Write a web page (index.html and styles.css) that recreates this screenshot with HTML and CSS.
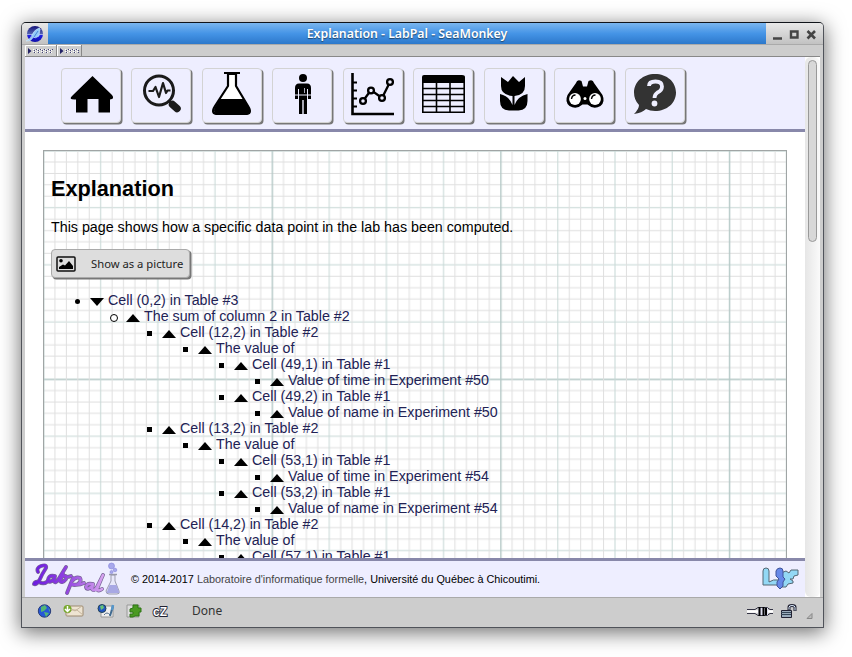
FILE: index.html
```html
<!DOCTYPE html>
<html lang="en">
<head>
<meta charset="utf-8">
<title>Explanation - LabPal</title>
<link rel="stylesheet" href="styles.css">
</head>
<body>
<div class="window">
  <div class="titlebar">
    <div class="app-icon"><svg width="18" height="18" viewBox="0 0 18 18"><defs><linearGradient id="sm" x2="0" y2="1"><stop offset="0" stop-color="#14147a"/><stop offset=".48" stop-color="#5260b0"/><stop offset=".52" stop-color="#2020ee"/><stop offset="1" stop-color="#1010a8"/></linearGradient></defs><circle cx="9" cy="9" r="8" fill="url(#sm)"/><path d="M1 9.500h16" stroke="#bcd" stroke-width=".8"/><path d="M0 16Q5 14 6 10 8 5 13 3Q15 3 13.500 7L13 11Q9 14 7 12Q6 16 0 16Z" fill="#94ccf8" stroke="#d4ecff" stroke-width=".6"/><path d="M8 12L12 6" stroke="#4a86d8"/></svg></div>
    <div class="title">Explanation - LabPal - SeaMonkey</div>
    <div class="controls"><svg width="57" height="21" viewBox="0 0 57 21"><path d="M7 15.500h9M25 8.500h6.500v6H25z" fill="none" stroke="#444" stroke-width="2.400"/><path d="M41.500 8l7.500 7.500M49 8l-7.500 7.500" stroke="#444" stroke-width="2.600"/></svg></div>
  </div>
  <div class="grippies">
    <svg width="60" height="11" viewBox="0 0 60 11"><path d="M.5 11V.500H31M33 .500h24" fill="none" stroke="#fff"/><path d="M31.500 0v11M56.500 0v11" stroke="#888"/><path d="M32.500 0v11" stroke="#fff"/><path d="M3 3l3.500 3-3.500 3zM35 3l3.500 3-3.500 3z" fill="#226"/><path d="M8 4.500h20M8 6.500h20M40 4.500h14M40 6.500h14" stroke="#fff" stroke-dasharray="1 3"/><path d="M10 5.500h18M10 7.500h18M42 5.500h12M42 7.500h12" stroke="#fff" stroke-dasharray="1 3"/><path d="M9 5.500h19M9 7.500h19M41 5.500h13M41 7.500h13M11 4.500h17M43 4.500h11" stroke="#447" stroke-dasharray="1 3"/></svg>
  </div>
  <div class="viewport">
    <div class="page">
      <nav class="menu">
        <a class="tool"><svg viewBox="0 0 60 55"><path d="M30.500 7L50 26q3 4-2 4.500v13H36.500V30h-11v13.500H14V30.500Q6 31 10 27z"/></svg></a>
        <a class="tool"><svg viewBox="0 0 60 55"><g fill="none" stroke="#1b1b1b"><circle cx="27" cy="21.500" r="14.500" stroke-width="3"/><path d="M16.500 22h4.500l2.500-4 3.500 10 4-14 3 10 1.500-2.500h3" stroke-width="2.200" stroke-linejoin="round"/><path d="M37 32l3 3" stroke-width="3"/><path d="M40.500 35.500l4.500 4" stroke-width="7.500" stroke-linecap="round"/></g></svg></a>
        <a class="tool"><svg viewBox="0 0 60 55"><path d="M26 5v12L13 37q-5 8 3 8h27q8 0 3-8L34 17V5z" fill="#fff" stroke="#000" stroke-width="2.200"/><path d="M22 4h16" stroke="#000" stroke-width="2.200"/><path d="M18 30h24l5 8q3 6-4 7H16q-6-1-3-7z"/></svg></a>
        <a class="tool"><svg viewBox="0 0 60 55"><circle cx="30" cy="9" r="4"/><path d="M26 14.500h8q4 0 4 4.500V30h-3V20h-1v25h-3.300V31h-1.400v14H26V20h-1v10h-3V19q0-4.500 4-4.500z"/><path d="M22 26h16" stroke="#eef"/><path d="M31.500 19v5" stroke="#aab"/></svg></a>
        <a class="tool"><svg viewBox="0 0 60 55"><g fill="none" stroke="#000"><path d="M9.500 4v41H51" stroke-width="2.600"/><path d="M10 13.500h4M10 21.500h4M10 29.500h4M10 37.500h4" stroke-width="2"/><path d="M20 32l8-11 11 8 8-16" stroke-width="2.300"/><g fill="#eef" stroke-width="2.300"><circle cx="20" cy="32" r="2.900"/><circle cx="28" cy="21.500" r="2.900"/><circle cx="39" cy="29" r="2.900"/><circle cx="47" cy="13" r="2.900"/></g></g></svg></a>
        <a class="tool"><svg viewBox="0 0 60 55"><path d="M8 8q0-2 2-2h38q3 0 3 2v6H8z"/><path d="M8.800 12h41.400v31.200H8.800zM22.500 12v31M36 12v31M9 19.500h41M9 25.500h41M9 31.500h41M9 37.500h41" fill="none" stroke="#000" stroke-width="1.600"/></svg></a>
        <a class="tool"><svg viewBox="0 0 60 55"><path d="M17 8l7 5 5-6 6 6 6-5v9q0 9-10.500 10v9Q34 27 43.500 25v7q0 9-9 9.500H25q-9-.5-9-9.500v-7q9 2 12.500 11v-9Q17 26 17 17z"/></svg></a>
        <a class="tool"><svg viewBox="0 0 60 55"><path d="M21 14q1-4 5.500-2L28 17.500h4l1.500-5.500q4.500-2 5.500 2l8.500 12q3 7-2 11-7 4-13-1.500h-5q-6 5.500-13 1.500-5-4-2-11z"/><g fill="#fff"><circle cx="20" cy="30" r="5.900"/><circle cx="40" cy="30" r="5.900"/></g><circle cx="30" cy="29.500" r="1.500" fill="#fff"/><path d="M16.500 30q.5-4 4-4M36.500 30q.5-4 4-4" fill="none" stroke="#000" stroke-width="1.400"/></svg></a>
        <a class="tool"><svg viewBox="0 0 60 55"><path d="M30 5c12 0 21 8 21 18.500S42 42 30 42q-5 0-9-2-4 4-12 5 5-5 5-9-5-5-5-12.500C9 13 18 5 30 5z" fill="#333"/><path d="M24 17q0-4.500 6.500-4.500 6.500 0 6.500 5 0 4-4.500 6-3 2-3 5.500" fill="none" stroke="#eef" stroke-width="3.800"/><circle cx="29.500" cy="34.500" r="2.900" fill="#eef"/></svg></a>
      </nav>
      <main class="content">
        <section class="paper">
          <svg class="grid"><defs><pattern id="graph" width="228.600" height="228.600" patternUnits="userSpaceOnUse" patternTransform="translate(-1 -1)"><g id="rows"><path d="M0 11.930h229M0 23.360h229M0 34.790h229M0 46.220h229M0 69.080h229M0 80.510h229M0 91.940h229M0 103.370h229M0 126.230h229M0 137.660h229M0 149.090h229M0 160.520h229M0 183.380h229M0 194.810h229M0 206.240h229M0 217.670h229" stroke="#dfdfdf"/><path d="M0 57.650h229M0 114.800h229M0 171.950h229" stroke="#c6d8d5"/><path d="M0 .700h229" stroke="#b4c8c6" stroke-width="1.400"/></g><use href="#rows" transform="matrix(0 1 1 0 0 0)"/></pattern></defs><rect width="100%" height="100%" fill="url(#graph)"/></svg>
          <h1>Explanation</h1>
          <p>This page shows how a specific data point in the lab has been computed.</p>
          <a class="picture-button"><svg width="20" height="16" viewBox="0 0 20 16"><rect x="1" y="1" width="18" height="14" rx="1" fill="none" stroke="#111" stroke-width="1.500"/><circle cx="5" cy="4.800" r="1.800"/><path d="M3 13V11l4-2.500 2 1L13 5l4 5v3z"/></svg><span>Show as a picture</span></a>
          <ul class="tree">
            <li class="disc"><i class="down"></i><a>Cell (0,2) in Table #3</a>
              <ul><li class="circle"><i></i><a>The sum of column 2 in Table #2</a>
                <ul>
                  <li><i></i><a>Cell (12,2) in Table #2</a>
                    <ul><li><i></i><a>The value of</a>
                      <ul>
                        <li><i></i><a>Cell (49,1) in Table #1</a><ul><li><i></i><a>Value of time in Experiment #50</a></li></ul></li>
                        <li><i></i><a>Cell (49,2) in Table #1</a><ul><li><i></i><a>Value of name in Experiment #50</a></li></ul></li>
                      </ul></li></ul></li>
                  <li><i></i><a>Cell (13,2) in Table #2</a>
                    <ul><li><i></i><a>The value of</a>
                      <ul>
                        <li><i></i><a>Cell (53,1) in Table #1</a><ul><li><i></i><a>Value of time in Experiment #54</a></li></ul></li>
                        <li><i></i><a>Cell (53,2) in Table #1</a><ul><li><i></i><a>Value of name in Experiment #54</a></li></ul></li>
                      </ul></li></ul></li>
                  <li><i></i><a>Cell (14,2) in Table #2</a>
                    <ul><li><i></i><a>The value of</a>
                      <ul><li><i></i><a>Cell (57,1) in Table #1</a></li></ul></li></ul></li>
                </ul></li></ul></li>
          </ul>
        </section>
      </main>
      <footer class="footer">
        <svg class="logo" width="90" height="34" viewBox="0 0 90 34"><defs><linearGradient id="lp" gradientUnits="userSpaceOnUse" x1="0" y1="0" x2="74" y2="0"><stop offset="0" stop-color="#6a1ae0"/><stop offset=".45" stop-color="#9040e0"/><stop offset="1" stop-color="#dcaaf0"/></linearGradient><g id="word" fill="none" stroke-linecap="round" stroke-linejoin="round"><path d="M6 10Q4 6 9 4 15 2 14 6 10 12 7 19 4 23 2 22 3 19 7 20 12 23 16 19"/><path d="M22 14q-5-1-6 4 1 4 6-1l1-3-1 5q1 3 4-1L34 5M31 12l-3 7q2 3 6-2 1-4-3-3M34 15q3 0 5-1"/><path d="M41 16L35 31M40 19q4-5 8-3 2 3-2 6-4 2-7 0 7 2 13-1"/><path d="M60 22q-5-1-6 3 1 4 6-1l1-2-1 5q2 3 5-2L71 13M70 15l-5 12q1 3 5 0"/></g></defs><use href="#word" stroke="#776497" stroke-width="3.900"/><use href="#word" stroke="url(#lp)" stroke-width="2.500"/><path d="M79 13v6l-5 10q0 3 3 3h8q3 0 2-3l-4-10v-6z" fill="#e8e8fa" stroke="#9b9bae"/><path d="M77.500 23h7l3 8H74.500z" fill="#a8a8e4"/><path d="M77 12.500h8" stroke="#99a" stroke-width="1.500"/><g fill="#a8a8ec" stroke="#8585dc" stroke-width=".6"><circle cx="79.500" cy="4" r="3"/><circle cx="83" cy="8" r="1.800"/><circle cx="79.500" cy="10" r="1.500"/></g></svg>
        <span class="copyright">© 2014-2017 <a>Laboratoire d'informatique formelle</a>, Université du Québec à Chicoutimi.</span>
        <svg class="lif" width="38" height="24" viewBox="0 0 38 24"><path d="M2 4q0-3 3-3t3 3v11q4-3 10-2v5H2z" fill="#93d8f5" stroke="#556773"/><path d="M20 6l5-2 3 2 2-3h7v5l-4 1-1 3h-3l3 2v2l-5 1-2 3h-5z" fill="#93d8f5" stroke="#556773"/><path d="M15 4q1-3 4-3t3 3v6l2 2-2 3v4l-3 3-3-3v-4l2-3-3-3z" fill="#6688e8" stroke="#405398"/></svg>
      </footer>
    </div>
    <div class="scrollbar"><div class="thumb"></div></div>
  </div>
  <div class="statusbar">
    <svg width="144" height="18" viewBox="0 0 144 18"><circle cx="11.500" cy="9" r="6.200" fill="#2557d8" stroke="#283d77"/><path d="M8 5l4-2 2 3-3 3-3 1zM11 10l5 1-3 4zM15 6l2 2v2z" fill="#54b774"/><rect x="33" y="4" width="17" height="10" rx="1" fill="#eee4d2" stroke="#9d8a70"/><path d="M33 13l6-5h5l6 5M34 4l8 5 7-5" fill="none" stroke="#c5b59d"/><circle cx="34.500" cy="7" r="4" fill="#77a82c"/><path d="M34.500 4v5M32 7l2.500 2.500L37 7" stroke="#fff" stroke-width="1.500" fill="none"/><path d="M68 4h12v11H68z" fill="#eee" stroke="#999"/><circle cx="69" cy="6.500" r="4" fill="#2255c7" stroke="#245"/><path d="M67 4l3-1 1 3-3 2z" fill="#69c477"/><path d="M71 13q3-4 6 0" stroke="#58718b" fill="none"/><path d="M80 4l-3 10" stroke="#406a90" stroke-width="2"/><path d="M80 3l-1 5" stroke="#5696c9" stroke-width="2.500"/><path d="M94 3h12v12H94z" fill="#ddd" stroke="#999"/><path d="M100 6V3h5v3h3v4h-2v4h-4l-2 1h-3v-3h3v-2h-3V7z" fill="#4a9a22" stroke="#2d7514"/><text x="120" y="14" class="cz">cZ</text></svg>
    <span class="done">Done</span>
    <svg class="status-right" width="72" height="20" viewBox="0 0 72 20"><path d="M1 8.500h8l3-2h9l3 2h3M1 12.500h8l3 2h9l3-2h3" fill="none" stroke="#334"/><path d="M1 10.500h26" stroke="#fff" stroke-width="2.500"/><path d="M12 7h10v7H12z" fill="#dde"/><path d="M13.500 6v9M17.500 6v9M20 7v7" stroke="#000" stroke-width="2"/><path d="M35.500 9.500h10v7h-10z" fill="#9ab" stroke="#223"/><path d="M35 11.500h10M35 13.500h10" stroke="#345"/><path d="M43 9V6q0-1.500 3-1.500T49 6v4" fill="none" stroke="#223" stroke-width="3"/><path d="M43 8.500V6.500q0-2 3-2t3 2v3" fill="none" stroke="#def"/><path d="M61 17.500h5v-5z" fill="#bbb" stroke="#888"/></svg>
  </div>
</div>
</body>
</html>
```
FILE: styles.css
```css
* { box-sizing: border-box; }
body { margin: 0; width: 852px; height: 657px; overflow: hidden; background: #fff; padding: 22px 28px 29px 21px; font-family: "Liberation Sans", sans-serif; }
svg { display: block; }
.window { height: 606px; border: 1px solid #50535a; border-top-color: #10141a; border-radius: 5px 5px 1px 1px; background: #cdcdcd; box-shadow: 0 4px 20px 1px rgba(0,0,0,.55); display: flex; flex-direction: column; overflow: hidden; }
.titlebar { height: 22px; flex: none; display: flex; background: linear-gradient(#e8e8e8, #c2c2c2); border-bottom: 1px solid #aaa; }
.app-icon { width: 26px; padding: 2px 0 0 4px; }
.title { flex: 1; background: linear-gradient(#7ab6ef, #4594e6 50%, #2c78cb); color: #fff; font: 600 12.300px/22px "Noto Sans", sans-serif; text-align: center; text-shadow: 0 1px 1px #246; }
.controls { width: 57px; }
.grippies { height: 12px; flex: none; margin: 0 3px; border-bottom: 1px solid #888; }
.viewport { height: 540px; flex: none; margin: 0 3px; display: flex; background: #fff; }
.page { width: 780px; display: flex; flex-direction: column; }
.menu { height: 75px; flex: none; background: #eef; border-bottom: 3px solid #88a; padding: 11px 0 0 36px; display: flex; gap: 10.450px; }
.tool { width: 60px; height: 55px; flex: none; border: 1px solid #d3d3d3; border-radius: 4px; box-shadow: 1.500px 1.500px .5px 0 #777; background: #eef; }
.tool svg { width: 60px; height: 55px; margin: 0 0 0 -.5px; }
.content { height: 426px; flex: none; overflow: hidden; padding: 18px 18px 0; }
.paper { position: relative; height: 420px; border: 1px solid #a0a5a5; padding: 0 7px; line-height: 16px; overflow: hidden; }
.grid { position: absolute; inset: 0; width: 100%; height: 100%; }
.paper > :not(.grid) { position: relative; }
h1 { font-size: 21.700px; line-height: 26px; margin: 25px 0 17px; }
.paper p { margin: 0 0 13px; line-height: 17px; font-size: 14.280px; }
.picture-button { display: flex; align-items: center; width: 139px; height: 29px; border: 1px solid #aaa; border-radius: 4px; background: #ddd; box-shadow: 1.500px 1.500px .5px 0 #777; padding-left: 4px; gap: 15px; font: 11.250px "Noto Sans", sans-serif; color: #222; white-space: nowrap; }
.picture-button svg { flex: none; }
ul { margin: 0; padding-left: 36px; list-style: none; }
.tree { margin: 14px 0 0; padding-left: 39px; font-size: 14.250px; }
li { white-space: nowrap; position: relative; }
li::before { content: ""; position: absolute; left: -15px; top: 7px; width: 5px; height: 5px; background: #000; }
li.disc::before { border-radius: 50%; }
li.circle::before { left: -16px; top: 6px; width: 6px; height: 6px; border: 1px solid #000; border-radius: 50%; background: #fff; }
li a { color: #225; }
li i { position: relative; top: -2px; display: inline-block; width: 14px; height: 8px; margin-right: 4px; vertical-align: -3px; background: #000; clip-path: polygon(50% 0, 100% 100%, 0 100%); }
li i.down { clip-path: polygon(0 0, 100% 0, 50% 100%); }
.footer { height: 39px; flex: none; border-top: 3px solid #88a; background: #eef; display: flex; align-items: center; padding: 0 6px 0 7px; font-size: 10.850px; }
.logo { flex: none; }
.copyright { margin-left: 9px; }
.copyright a { color: #444; }
.lif { margin-left: auto; }
.scrollbar { width: 15px; background: linear-gradient(90deg, #e6e6e6, #fafafa); border-radius: 6px; padding: 3px 3px 0; }
.thumb { height: 182px; width: 9px; border: 1px solid #999; border-radius: 5px; background: #d8d8d8; }
.statusbar { height: 30px; flex: none; border-top: 1px solid #aaa; display: flex; align-items: center; padding: 0 5px 4px 11px; font: 12px "Noto Sans", sans-serif; color: #333; }
.cz { font: bold 12px "Liberation Sans"; fill: #fff; stroke: #223; stroke-width: 1.800px; paint-order: stroke; }
.done { margin-left: 15px; }
.status-right { margin-left: auto; }
```
